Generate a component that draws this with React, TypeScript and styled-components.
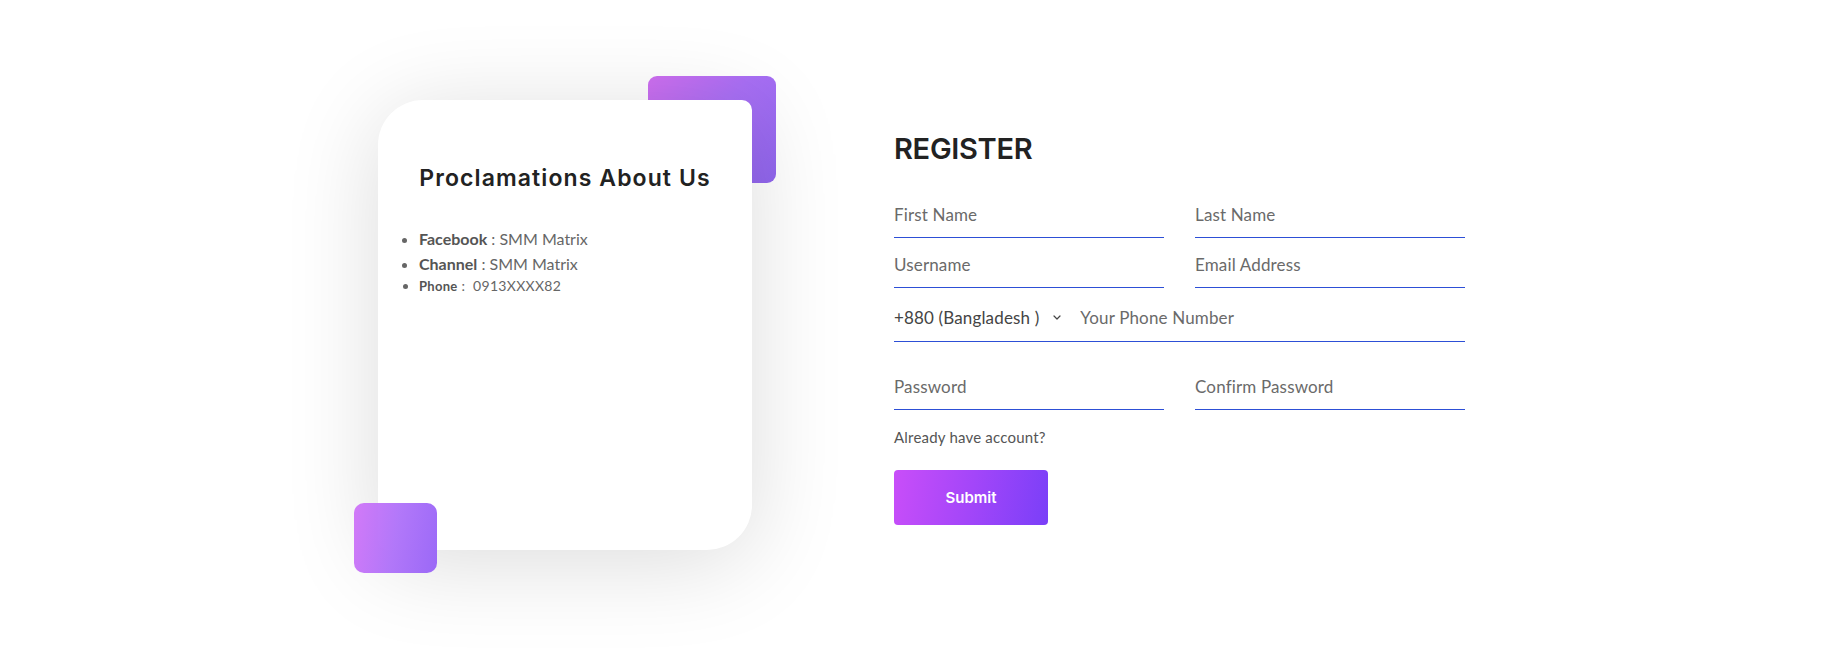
import React from "react";
import styled, { createGlobalStyle } from "styled-components";

const GlobalStyle = createGlobalStyle`
  html, body {
    margin: 0;
    padding: 0;
    background: #ffffff;
  }
  body {
    font-family: "Lato", "Open Sans", sans-serif;
    color: #666666;
  }
  * { box-sizing: border-box; }
`;

const Page = styled.main`
  width: 1835px;
  height: 663px;
  display: flex;
  justify-content: center;
  align-items: flex-start;
  gap: 142px;
  padding: 100px 0 0 8px;
  overflow: hidden;
`;

const CardArea = styled.section`
  position: relative;
  width: 374px;
  height: 450px;
  flex: none;
`;

const Card = styled.div`
  position: relative;
  z-index: 1;
  width: 374px;
  height: 450px;
  background: #ffffff;
  border-radius: 45px 10px 45px 10px;
  box-shadow: 0 12px 95px rgba(0, 0, 0, 0.14);
  padding: 65px 20px 0 30px;
`;

const Square = styled.div<{ $pos: "top" | "bottom" }>`
  position: absolute;
  border-radius: ${(p) => (p.$pos === "top" ? "9px" : "10px")};
  ${(p) =>
    p.$pos === "top"
      ? `
    z-index: 0;
    left: 270px;
    top: -24px;
    width: 128px;
    height: 107px;
    background: linear-gradient(135deg, #d06ff1 0%, #a86ff4 45%, #9066ee 100%);
  `
      : `
    z-index: 2;
    left: -24px;
    top: 403px;
    width: 83px;
    height: 70px;
    opacity: 0.94;
    background: linear-gradient(100deg, #d072f8 0%, #ad6ff9 50%, #9560f7 100%);
  `}
`;

const CardTitle = styled.h2`
  margin: 0 0 0 -10px;
  font-family: "Inter", sans-serif;
  font-weight: 600;
  font-size: 23px;
  line-height: 26px;
  letter-spacing: 1.1px;
  color: #222222;
  text-align: center;
`;

const InfoList = styled.ul`
  margin: 35px 0 0 0;
  padding: 0 0 0 11px;
  color: #666666;
`;

const InfoItem = styled.li<{ $small?: boolean }>`
  font-size: ${(p) => (p.$small ? "14px" : "16px")};
  line-height: ${(p) => (p.$small ? "19px" : "25px")};
  letter-spacing: ${(p) => (p.$small ? "0.3px" : "0")};
  b {
    font-weight: 700;
    color: #555555;
    font-size: ${(p) => (p.$small ? "13px" : "16px")};
  }
`;

const Form = styled.form`
  width: 571px;
  flex: none;
  padding-top: 31px;
  display: flex;
  flex-direction: column;
`;

const Heading = styled.h1`
  margin: 0;
  font-family: "Inter", sans-serif;
  font-weight: 600;
  font-size: 29px;
  line-height: 36px;
  letter-spacing: -0.3px;
  color: #222222;
`;

const Row = styled.div<{ $mt: number }>`
  margin-top: ${(p) => p.$mt}px;
  display: grid;
  grid-template-columns: 1fr 1fr;
  column-gap: 31px;
`;

const Field = styled.input`
  width: 100%;
  height: 45px;
  padding: 0 0 2px 0;
  border: none;
  border-bottom: 1px solid #2d4fd6;
  outline: none;
  background: transparent;
  font-family: "Lato", sans-serif;
  font-size: 17px;
  letter-spacing: 0.15px;
  color: #444444;
  &::placeholder {
    color: #6a6a6a;
  }
`;

const PhoneRow = styled.div`
  margin-top: 5px;
  height: 49px;
  display: flex;
  align-items: center;
  border-bottom: 1px solid #2d4fd6;
`;

const CountrySelect = styled.button`
  display: flex;
  align-items: center;
  gap: 14px;
  padding: 0;
  margin: 0 19px 0 0;
  border: none;
  background: transparent;
  font-family: "Lato", sans-serif;
  font-size: 17px;
  letter-spacing: 0.15px;
  color: #444444;
  cursor: pointer;
`;

const PhoneInput = styled.input`
  flex: 1;
  height: 100%;
  padding: 0;
  border: none;
  outline: none;
  background: transparent;
  font-family: "Lato", sans-serif;
  font-size: 17px;
  letter-spacing: 0.15px;
  color: #444444;
  &::placeholder {
    color: #6a6a6a;
  }
`;

const LoginLink = styled.a`
  margin-top: 17px;
  font-family: "Lato", sans-serif;
  font-size: 15px;
  line-height: 20px;
  letter-spacing: 0.2px;
  color: #555555;
  text-decoration: none;
`;

const SubmitButton = styled.button`
  margin-top: 23px;
  width: 154px;
  height: 55px;
  border: none;
  border-radius: 4px;
  background: linear-gradient(100deg, #c94ef9 0%, #a346f9 50%, #7a3ff8 100%);
  color: #ffffff;
  font-family: "Inter", sans-serif;
  font-weight: 600;
  font-size: 15px;
  cursor: pointer;
`;

const Chevron = () => (
  <svg width="8" height="5" viewBox="0 0 8 5" fill="none">
    <path d="M1 1l3 3 3-3" stroke="#444" strokeWidth="1.2" strokeLinecap="round" strokeLinejoin="round" />
  </svg>
);

export default function App() {
  return (
    <>
      <GlobalStyle />
      <Page>
        <CardArea>
          <Square $pos="top" />
          <Card>
            <CardTitle>Proclamations About Us</CardTitle>
            <InfoList>
              <InfoItem>
                <b>Facebook</b> : SMM Matrix
              </InfoItem>
              <InfoItem>
                <b>Channel</b> : SMM Matrix
              </InfoItem>
              <InfoItem $small>
                <b>Phone</b> :&nbsp; 0913XXXX82
              </InfoItem>
            </InfoList>
          </Card>
          <Square $pos="bottom" />
        </CardArea>
        <Form onSubmit={(e) => e.preventDefault()}>
          <Heading>REGISTER</Heading>
          <Row $mt={26}>
            <Field placeholder="First Name" />
            <Field placeholder="Last Name" />
          </Row>
          <Row $mt={5}>
            <Field placeholder="Username" />
            <Field placeholder="Email Address" />
          </Row>
          <PhoneRow>
            <CountrySelect type="button">
              +880 (Bangladesh )
              <Chevron />
            </CountrySelect>
            <PhoneInput placeholder="Your Phone Number" />
          </PhoneRow>
          <Row $mt={23}>
            <Field type="password" placeholder="Password" />
            <Field type="password" placeholder="Confirm Password" />
          </Row>
          <LoginLink href="#">Already have account?</LoginLink>
          <div>
            <SubmitButton type="submit">Submit</SubmitButton>
          </div>
        </Form>
      </Page>
    </>
  );
}
